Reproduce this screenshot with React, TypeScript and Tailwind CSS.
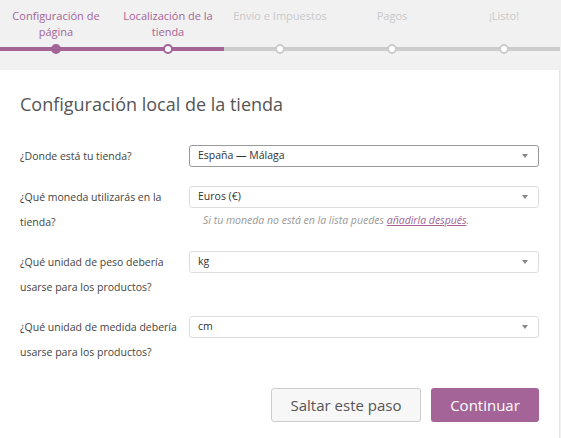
import React from 'react';

type Step = { label: string; state: 'done' | 'active' | 'todo' };

const steps: Step[] = [
  { label: 'Configuración de página', state: 'done' },
  { label: 'Localización de la tienda', state: 'active' },
  { label: 'Envío e Impuestos', state: 'todo' },
  { label: 'Pagos', state: 'todo' },
  { label: '¡Listo!', state: 'todo' },
];

const Select: React.FC<{ value: string; focused?: boolean }> = ({ value, focused }) => (
  <div
    className={`flex h-[22px] items-center justify-between rounded-[3px] border bg-white pl-[8px] pr-[10px] text-[10.5px] text-[#333] ${
      focused ? 'border-[#999]' : 'border-[#ddd]'
    }`}
  >
    <span>{value}</span>
    <span className="h-0 w-0 border-x-[3.5px] border-t-[4px] border-x-transparent border-t-[#888]" />
  </div>
);

const Field: React.FC<{ label: string; first?: boolean; children: React.ReactNode }> = ({ label, first, children }) => (
  <div className={`flex ${first ? 'mb-4' : 'mb-[15px]'}`}>
    <div className="w-[169px] shrink-0 pr-3 text-[10.5px] leading-[25px] text-[#444]">{label}</div>
    <div className="flex-1 pt-[1px]">{children}</div>
  </div>
);

const App: React.FC = () => {
  return (
    <div className="h-[438px] w-[561px] overflow-hidden bg-[#f1f1f1]" style={{ fontFamily: '"Open Sans", sans-serif' }}>
      {/* steps */}
      <div className="flex h-[70px] w-[560px]">
        {steps.map((s) => {
          const purple = s.state !== 'todo';
          return (
            <div key={s.label} className="flex w-[112px] flex-col">
              <div
                className={`h-[41px] px-2 pt-[8px] text-center text-[11px] leading-[16px] ${
                  purple ? 'text-[#a46497]' : 'text-[#c8c8c8]'
                }`}
              >
                {s.label}
              </div>
              <div className="relative h-[16px]">
                <div className={`mt-[6px] h-[4px] w-full ${purple ? 'bg-[#a46497]' : 'bg-[#ccc]'}`} />
                <div
                  className={`absolute left-[51px] top-[3px] h-[10px] w-[10px] rounded-full border-[2.5px] ${
                    s.state === 'done'
                      ? 'border-[#a46497] bg-[#a46497]'
                      : s.state === 'active'
                        ? 'border-[#a46497] bg-white'
                        : 'border-[#ccc] bg-white'
                  }`}
                />
              </div>
            </div>
          );
        })}
      </div>

      {/* card */}
      <div className="h-[368px] w-[560px] border-r border-[#e5e5e5] bg-white px-5 pt-[20px]">
        <h1 className="mb-[26px] text-[18px] leading-[28px] font-normal text-[#555]">
          Configuración local de la tienda
        </h1>

        <Field label="¿Donde está tu tienda?" first>
          <Select value="España — Málaga" focused />
        </Field>

        <Field label="¿Qué moneda utilizarás en la tienda?">
          <Select value="Euros (€)" />
          <p className="mt-[5px] pl-[14px] text-[10.5px] leading-[14px] text-[#999] italic">
            Si tu moneda no está en la lista puedes{' '}
            <a href="#" className="text-[#a46497] underline">
              añadirla después
            </a>
            .
          </p>
        </Field>

        <Field label="¿Qué unidad de peso debería usarse para los productos?">
          <Select value="kg" />
        </Field>

        <Field label="¿Qué unidad de medida debería usarse para los productos?">
          <Select value="cm" />
        </Field>

        <div className="mt-[23px] flex justify-end gap-[10px]">
          <button className="h-[34px] w-[150px] rounded-[3px] border border-[#ccc] bg-[#f7f7f7] text-[15px] text-[#555]">
            Saltar este paso
          </button>
          <button className="h-[34px] w-[108px] rounded-[3px] bg-[#a46497] text-[15px] text-white">
            Continuar
          </button>
        </div>
      </div>
    </div>
  );
};

export default App;
